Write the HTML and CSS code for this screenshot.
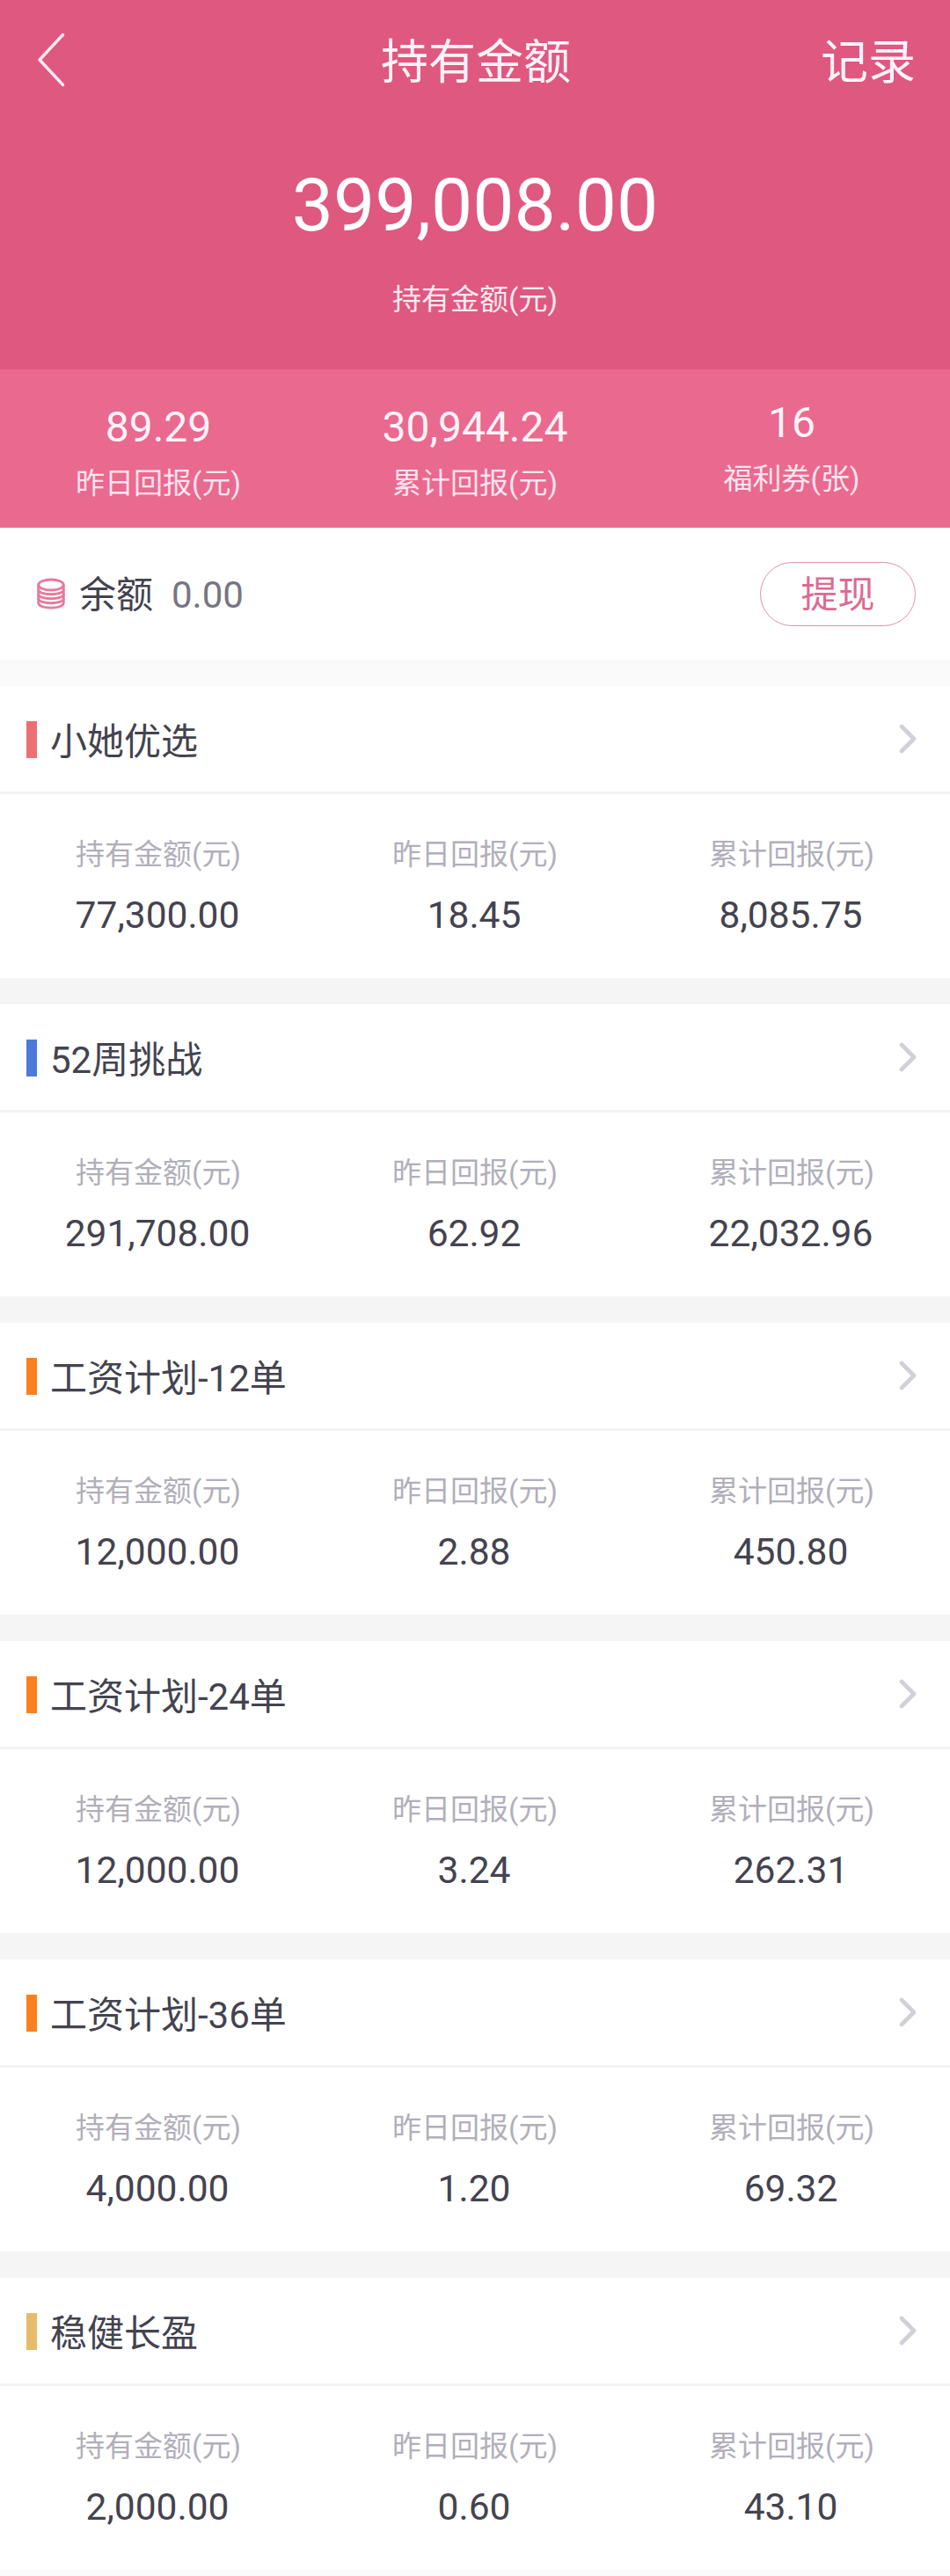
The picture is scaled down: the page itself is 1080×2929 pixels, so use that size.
FILE: index.html
```
<!DOCTYPE html>
<html lang="zh-CN">
<head>
  <meta charset="UTF-8">
  <meta name="viewport" content="width=device-width, initial-scale=1.0">
  <title>持有金额</title>
  <link rel="stylesheet" href="styles.css">
</head>
<body>
  <!-- Shared icon -->
  <svg class="sprite" width="0" height="0">
    <symbol id="arrow" viewBox="0 0 20 34">
      <path d="M3 3 L17 17 L3 31" fill="none" stroke="#d1d0d7" stroke-width="4.6" stroke-linecap="round" stroke-linejoin="round"/>
    </symbol>
  </svg>

  <header class="hero">
    <nav class="navbar">
      <a class="back" href="#">
        <svg width="34" height="64" viewBox="0 0 34 64">
          <path d="M30.5 3.5 L4 32 L30.5 60.5" fill="none" stroke="#ffe9f3" stroke-width="3.4" stroke-linecap="round" stroke-linejoin="round"/>
        </svg>
      </a>
      <h1>持有金额</h1>
      <a class="record" href="#">记录</a>
    </nav>
    <div class="total">399,008.00</div>
    <div class="total-label">持有金额(元)</div>
  </header>

  <section class="stats">
    <div class="stat">
      <div class="stat-value">89.29</div>
      <div class="stat-label">昨日回报(元)</div>
    </div>
    <div class="stat">
      <div class="stat-value">30,944.24</div>
      <div class="stat-label">累计回报(元)</div>
    </div>
    <div class="stat coupon">
      <div class="stat-value">16</div>
      <div class="stat-label">福利券(张)</div>
    </div>
  </section>

  <section class="balance">
    <svg class="coins" width="32" height="36" viewBox="0 0 32 36">
      <g fill="none" stroke="#e8799a" stroke-width="2.8">
        <ellipse cx="16" cy="8" rx="14.3" ry="6"/>
        <path d="M1.7 8 V28.500 C1.7 36 30.300 36 30.300 28.500 V8"/>
        <path d="M1.7 13.500 C1.7 20.500 30.300 20.500 30.300 13.500"/>
        <path d="M1.7 18.500 C1.7 25.500 30.300 25.500 30.300 18.500"/>
        <path d="M1.7 23.500 C1.7 30.500 30.300 30.500 30.300 23.500"/>
      </g>
    </svg>
    <span class="balance-label">余额</span>
    <span class="balance-value">0.00</span>
    <button class="withdraw" type="button">提现</button>
  </section>

  <main class="plans">
    <section class="card">
      <div class="card-header red">
        <h2>小她优选</h2>
        <svg class="arrow"><use href="#arrow"/></svg>
      </div>
      <div class="card-body">
        <div class="item"><span>持有金额(元)</span><b>77,300.00</b></div>
        <div class="item"><span>昨日回报(元)</span><b>18.45</b></div>
        <div class="item"><span>累计回报(元)</span><b>8,085.75</b></div>
      </div>
    </section>

    <section class="card">
      <div class="card-header blue">
        <h2>52周挑战</h2>
        <svg class="arrow"><use href="#arrow"/></svg>
      </div>
      <div class="card-body">
        <div class="item"><span>持有金额(元)</span><b>291,708.00</b></div>
        <div class="item"><span>昨日回报(元)</span><b>62.92</b></div>
        <div class="item"><span>累计回报(元)</span><b>22,032.96</b></div>
      </div>
    </section>

    <section class="card">
      <div class="card-header orange">
        <h2>工资计划-12单</h2>
        <svg class="arrow"><use href="#arrow"/></svg>
      </div>
      <div class="card-body">
        <div class="item"><span>持有金额(元)</span><b>12,000.00</b></div>
        <div class="item"><span>昨日回报(元)</span><b>2.88</b></div>
        <div class="item"><span>累计回报(元)</span><b>450.80</b></div>
      </div>
    </section>

    <section class="card">
      <div class="card-header orange">
        <h2>工资计划-24单</h2>
        <svg class="arrow"><use href="#arrow"/></svg>
      </div>
      <div class="card-body">
        <div class="item"><span>持有金额(元)</span><b>12,000.00</b></div>
        <div class="item"><span>昨日回报(元)</span><b>3.24</b></div>
        <div class="item"><span>累计回报(元)</span><b>262.31</b></div>
      </div>
    </section>

    <section class="card">
      <div class="card-header orange">
        <h2>工资计划-36单</h2>
        <svg class="arrow"><use href="#arrow"/></svg>
      </div>
      <div class="card-body">
        <div class="item"><span>持有金额(元)</span><b>4,000.00</b></div>
        <div class="item"><span>昨日回报(元)</span><b>1.20</b></div>
        <div class="item"><span>累计回报(元)</span><b>69.32</b></div>
      </div>
    </section>

    <section class="card">
      <div class="card-header gold">
        <h2>稳健长盈</h2>
        <svg class="arrow"><use href="#arrow"/></svg>
      </div>
      <div class="card-body">
        <div class="item"><span>持有金额(元)</span><b>2,000.00</b></div>
        <div class="item"><span>昨日回报(元)</span><b>0.60</b></div>
        <div class="item"><span>累计回报(元)</span><b>43.10</b></div>
      </div>
    </section>
  </main>
</body>
</html>
```
FILE: styles.css
```
* {
  box-sizing: border-box;
}

body {
  margin: 0;
  font-family: Roboto, "Noto Sans CJK SC", sans-serif;
  color: #44434f;
  background: #fafafa;
}

a {
  color: inherit;
  text-decoration: none;
}

h1, h2 {
  margin: 0;
  font-weight: 400;
}

.sprite {
  display: block;
}

/* Top area */
.hero {
  height: 420px;
  background: #df587f;
  color: #fff;
  text-align: center;
}

.navbar {
  display: grid;
  grid-template-columns: 1fr auto 1fr;
  align-items: center;
  height: 144px;
  padding: 0 39px 0 41px;
  font-size: 54px;
  line-height: 80px;
  color: #fff3f9;
}

.navbar h1 {
  font-size: 54px;
}

.back {
  justify-self: start;
  display: flex;
  margin-bottom: 9px;
}

.record {
  justify-self: end;
}

.total {
  margin-top: 45px;
  font-size: 84px;
  line-height: 90px;
}

.total-label {
  margin-top: 37px;
  font-size: 33px;
  line-height: 50px;
  color: #ffeaf3;
}

.stats {
  display: grid;
  grid-template-columns: repeat(3, 1fr);
  height: 180px;
  padding-top: 36px;
  background: #ea698e;
  color: #fff3f9;
  text-align: center;
}

.stat-value {
  font-size: 48px;
  line-height: 60px;
}

.stat-label {
  margin-top: 9px;
  font-size: 33px;
  line-height: 50px;
  color: #ffe4f0;
}

.coupon {
  margin-top: -5px;
}

/* Balance row */
.balance {
  display: flex;
  align-items: center;
  height: 150px;
  padding: 0 39px 0 42px;
  background: #fff;
  font-size: 42px;
  line-height: 60px;
}

.balance-label {
  margin: 4px 0 0 16px;
}

.balance-value {
  margin: 4px 0 0 21px;
  color: #777582;
}

.withdraw {
  width: 177px;
  height: 73px;
  margin-left: auto;
  padding: 3px 0 0;
  border: 1.5px solid #dc92ad;
  border-radius: 37px;
  background: #fff;
  color: #dc6b92;
  font: inherit;
  line-height: 60px;
}

/* Plan cards */
.plans {
  display: flex;
  flex-direction: column;
  gap: 30px;
  margin-top: 30px;
  background: #f5f5f5;
}

.card {
  height: 332px;
  background: #fff;
}

.card-header {
  display: flex;
  align-items: center;
  height: 123px;
  padding: 0 38px 0 30px;
  border-bottom: 3px solid #f3f3f4;
}

.card-header::before {
  content: "";
  width: 12px;
  height: 42px;
  margin: 1px 15px 0 0;
  background: #ec7073;
}

.card-header.blue::before {
  background: #4c7adb;
}

.card-header.orange::before {
  background: #fb801b;
}

.card-header.gold::before {
  background: #e8bb6a;
}

.card-header h2 {
  margin-top: 7px;
  font-size: 42px;
  line-height: 60px;
}

.arrow {
  width: 20px;
  height: 34px;
  margin-left: auto;
}

.card-body {
  display: grid;
  grid-template-columns: repeat(3, 1fr);
  padding-top: 44px;
  text-align: center;
}

.item span, .item b {
  display: block;
}

.item span {
  font-size: 33px;
  line-height: 50px;
  color: #b1afba;
}

.item b {
  margin: 14px 2px 0 0;
  font-size: 42.5px;
  font-weight: 400;
  line-height: 60px;
}
```
